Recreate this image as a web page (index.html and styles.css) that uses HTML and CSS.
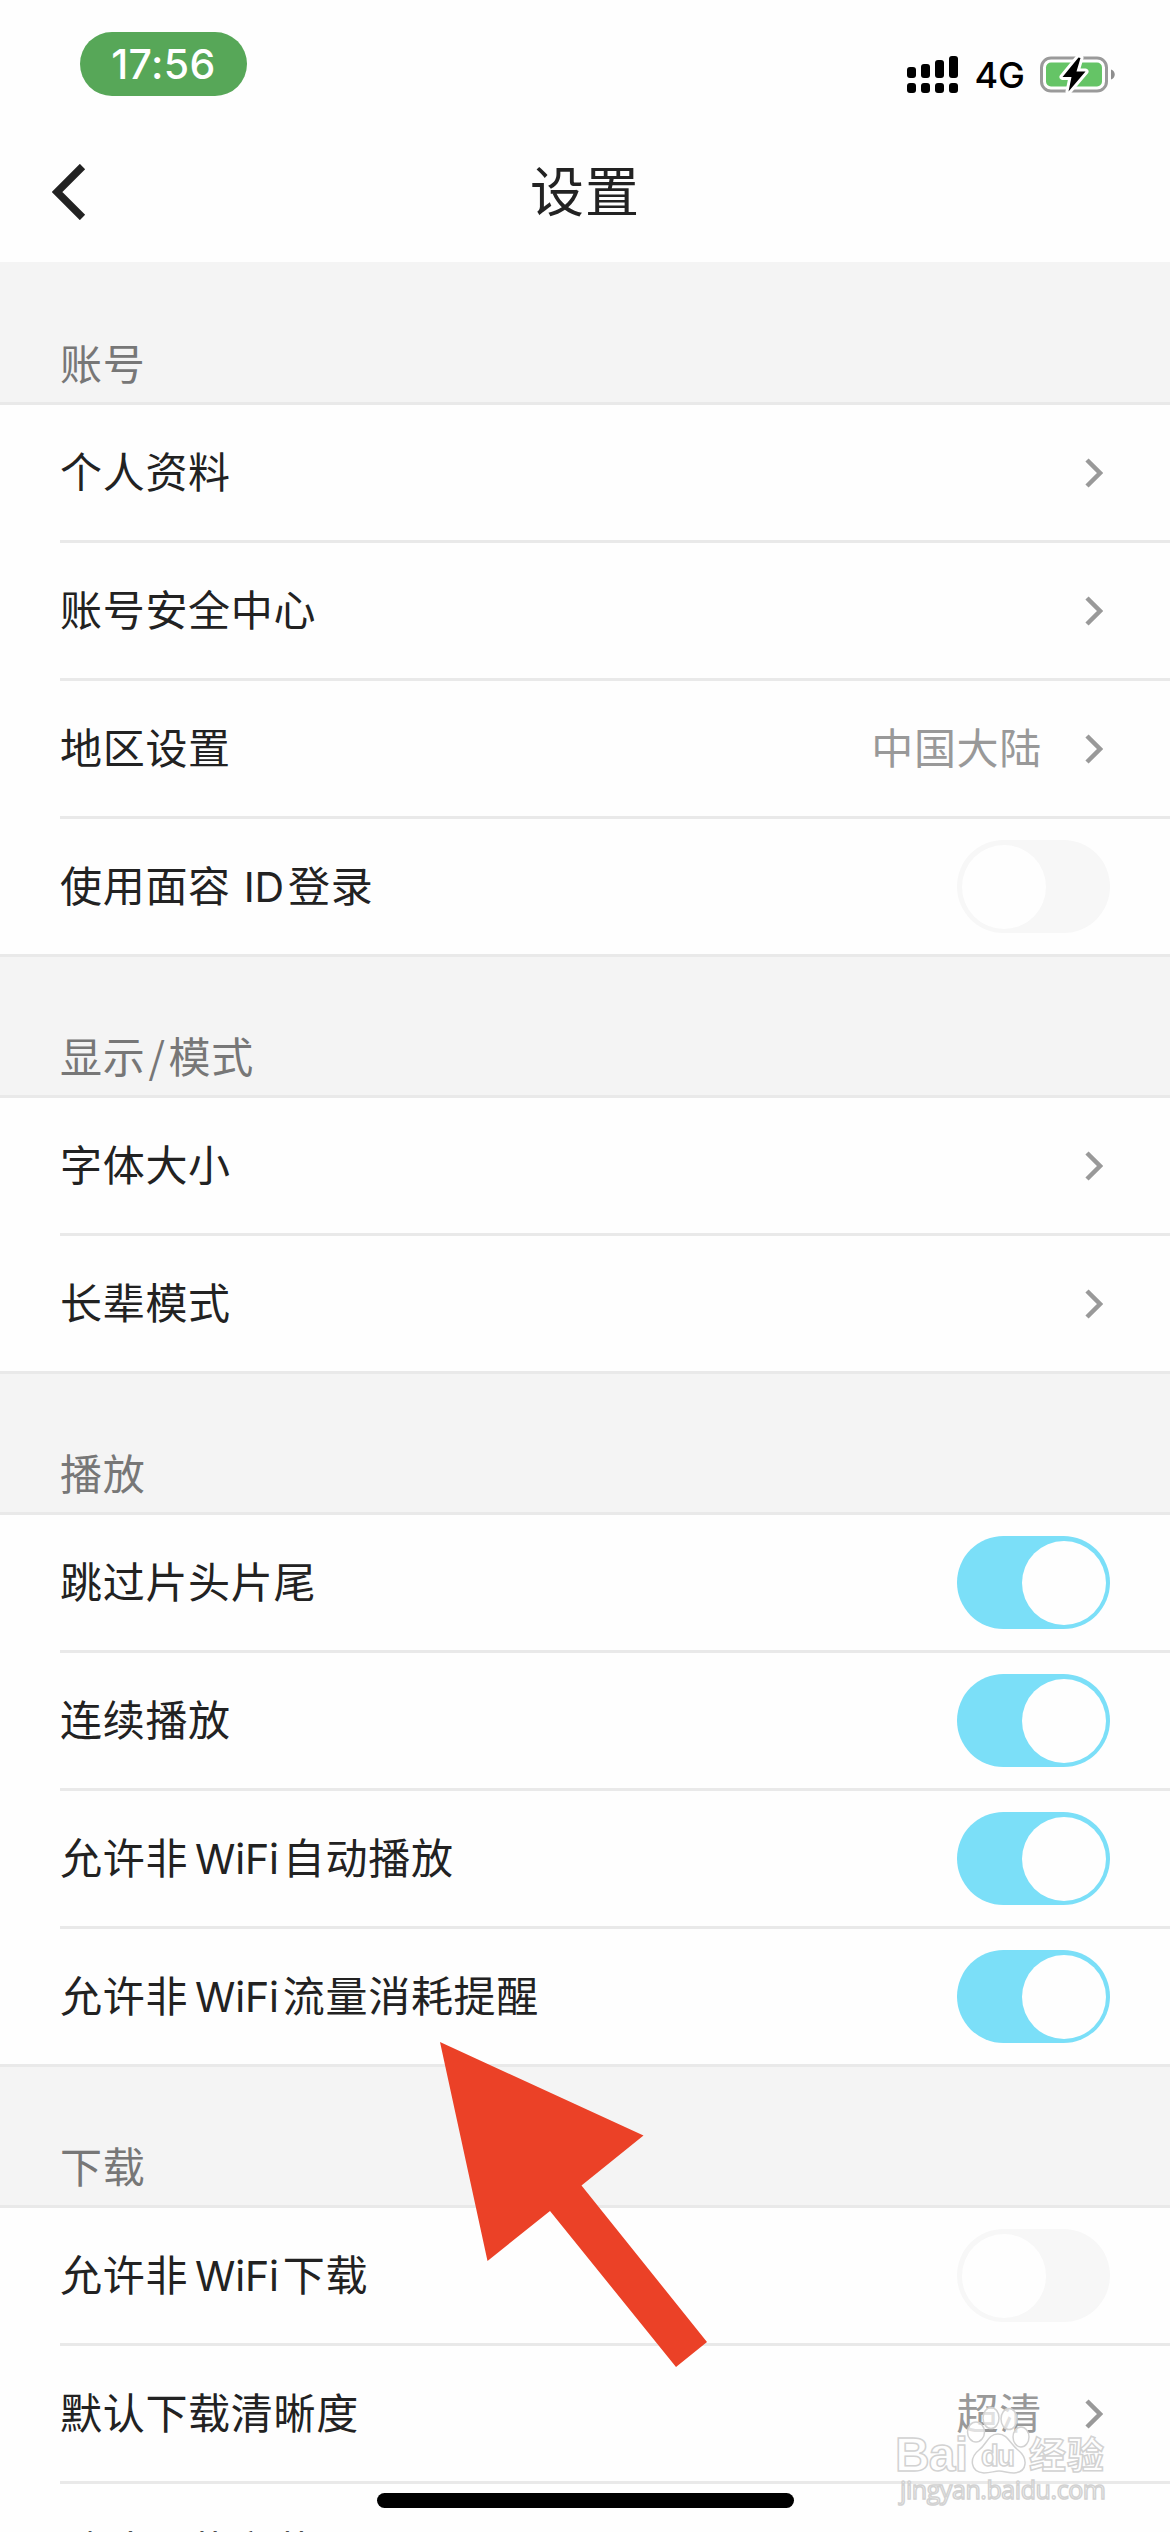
FILE: index.html
```
<!DOCTYPE html>
<html lang="zh-CN">
<head>
    <meta charset="UTF-8">
    <meta name="viewport" content="width=device-width, initial-scale=1.0">
    <link rel="stylesheet" href="styles.css">
    <title>设置</title>
</head>
<body>
  <div id="status-bar">
    <div id="clock">17:56</div>
    <div id="status-icons">
      <svg id="signal" viewBox="0 0 51 37" width="51" height="37">
        <rect x="0" y="11" width="9" height="11" rx="3"/>
        <rect x="14" y="8" width="9" height="14" rx="3"/>
        <rect x="28" y="4" width="9" height="18" rx="3"/>
        <rect x="42" y="0" width="9" height="22" rx="3"/>
        <rect x="0" y="27" width="9" height="10" rx="3"/>
        <rect x="14" y="27" width="9" height="10" rx="3"/>
        <rect x="28" y="27" width="9" height="10" rx="3"/>
        <rect x="42" y="27" width="9" height="10" rx="3"/>
      </svg>
      <span id="network">4G</span>
      <svg id="battery" viewBox="0 0 76 38" width="76" height="38">
        <rect x="1.5" y="2" width="65" height="33" rx="9.5" fill="none" stroke="#9a9a9a" stroke-width="3"/>
        <rect x="6" y="6.5" width="56" height="24" rx="5" fill="#65c466"/>
        <path d="M71 13.500c5 1.500 5 8.500 0 10z" fill="#8e8e8e"/>
        <path d="M38.500 1.500L22.500 21H31.500L28.500 35.500L45.500 15.500H36.500L40.500 2Z" fill="#000" stroke="#fff" stroke-width="6" stroke-linejoin="round" paint-order="stroke"/>
      </svg>
    </div>
  </div>

  <div id="navbar">
    <svg id="back" viewBox="0 0 34 56" width="34" height="56">
      <path d="M30.500 2.500L5 28L30.500 53.500" fill="none" stroke="#222" stroke-width="7.500"/>
    </svg>
    <h1>设置</h1>
  </div>

  <h2 class="first">账号</h2>
  <ul>
    <li><span class="label">个人资料</span><svg class="chevron" viewBox="0 0 18 30"><path d="M2 2L15 15L2 28"/></svg></li>
    <li><span class="label">账号安全中心</span><svg class="chevron" viewBox="0 0 18 30"><path d="M2 2L15 15L2 28"/></svg></li>
    <li><span class="label">地区设置</span><span class="value">中国大陆</span><svg class="chevron" viewBox="0 0 18 30"><path d="M2 2L15 15L2 28"/></svg></li>
    <li><span class="label">使用面容<span class="latin face-id">ID</span>登录</span><span class="switch"></span></li>
  </ul>

  <h2>显示<span class="slash">/</span>模式</h2>
  <ul>
    <li><span class="label">字体大小</span><svg class="chevron" viewBox="0 0 18 30"><path d="M2 2L15 15L2 28"/></svg></li>
    <li><span class="label">长辈模式</span><svg class="chevron" viewBox="0 0 18 30"><path d="M2 2L15 15L2 28"/></svg></li>
  </ul>

  <h2>播放</h2>
  <ul>
    <li><span class="label">跳过片头片尾</span><span class="switch on"></span></li>
    <li><span class="label">连续播放</span><span class="switch on"></span></li>
    <li><span class="label">允许非<span class="latin">WiFi</span>自动播放</span><span class="switch on"></span></li>
    <li><span class="label">允许非<span class="latin">WiFi</span>流量消耗提醒</span><span class="switch on"></span></li>
  </ul>

  <h2>下载</h2>
  <ul>
    <li><span class="label">允许非<span class="latin">WiFi</span>下载</span><span class="switch"></span></li>
    <li><span class="label">默认下载清晰度</span><span class="value">超清</span><svg class="chevron" viewBox="0 0 18 30"><path d="M2 2L15 15L2 28"/></svg></li>
    <li><span class="label">默认下载字幕</span></li>
  </ul>

  <svg id="arrow" viewBox="0 0 268 327" width="268" height="327">
    <path d="M0 0L203.500 93.500L141.500 143.500L267 300L236 325L110 169L47.500 219Z" fill="#eb4127"/>
  </svg>

  <svg id="watermark" viewBox="0 0 220 110" width="220" height="110">
    <g class="paw">
      <ellipse cx="72" cy="42" rx="8.500" ry="10"/>
      <ellipse cx="87" cy="28" rx="8" ry="10.500"/>
      <ellipse cx="105" cy="29" rx="8" ry="10.500"/>
      <ellipse cx="117" cy="47" rx="8" ry="10"/>
      <path d="M94 44C84 44 83 54 75 60C65 68 66 82 80 83C87 83 90 81 95 81C100 81 104 83 110 83C124 82 124 68 114 60C106 54 104 44 94 44Z"/>
    </g>
    <text class="brand" x="-9" y="81" textLength="73">Bai</text>
    <text class="du" x="77" y="76" textLength="34">du</text>
    <text class="brand-cn" x="125" y="79" textLength="75">经验</text>
    <text class="url" x="-4" y="109" textLength="206">jingyan.baidu.com</text>
  </svg>
  <div id="home-indicator"></div>
</body>
</html>
```

FILE: styles.css
```
* {
    box-sizing: border-box;
}

body {
    position: relative;
    width: 1170px;
    height: 2532px;
    margin: 0;
    overflow: hidden;
    background-color: #fefefe;
    color: #222;
    font-family: 'Noto Sans CJK SC', sans-serif;
    font-size: 42px;
    letter-spacing: 0.7px;
}

#status-bar {
    display: flex;
    justify-content: space-between;
    height: 120px;
    padding: 32px 54px 0 80px;
}

#clock {
    width: 167px;
    height: 64px;
    border-radius: 32px;
    background-color: #57a758;
    color: white;
    font: 500 41px/64px 'Inter', sans-serif;
    letter-spacing: 0.4px;
    text-align: center;
}

#status-icons {
    display: flex;
    align-items: center;
    height: 37px;
    margin-top: 24px;
}

#network {
    margin: 1px 15px 0 16px;
    color: black;
    font: 500 36px/37px 'Inter', sans-serif;
    letter-spacing: 0;
}

#navbar {
    display: flex;
    align-items: center;
    justify-content: center;
    position: relative;
    height: 142px;
}

#back {
    position: absolute;
    left: 52px;
    top: 44px;
}

h1 {
    margin: 0;
    padding-bottom: 5px;
    font-size: 54px;
    font-weight: 400;
    letter-spacing: 1px;
}

h2 {
    height: 138px;
    margin: 0;
    padding: 66px 60px 0;
    background-color: #f4f4f4;
    color: #777;
    font-size: 42px;
    font-weight: 400;
    line-height: 64px;
}

h2.first {
    height: 140px;
    padding-top: 68px;
}

ul {
    margin: 0;
    padding: 0;
    border-top: 3px solid #e9e9e9;
    border-bottom: 3px solid #e9e9e9;
    list-style: none;
}

li {
    display: flex;
    align-items: center;
    height: 138px;
    margin-left: 60px;
    padding-right: 60px;
    border-bottom: 3px solid #e9e9e9;
}

li:last-child {
    height: 135px;
    border-bottom: none;
}

.label,
.value {
    padding-bottom: 7px;
}

.latin {
    margin: 0 4px 0 7px;
    font-family: 'Inter', sans-serif;
    font-size: 41px;
    letter-spacing: -0.2px;
}

.face-id {
    margin-left: 13px;
}

.slash {
    margin: 0 3px;
}

.value {
    margin-left: auto;
    color: #999;
}

.chevron {
    width: 18px;
    height: 30px;
    margin-left: auto;
    margin-right: 7px;
    fill: none;
    stroke: #999;
    stroke-width: 4.500;
}

.value + .chevron {
    margin-left: 43px;
}

.switch {
    display: flex;
    width: 153px;
    height: 93px;
    margin-left: auto;
    padding: 4.500px;
    border-radius: 47px;
    background-color: #f7f7f7;
}

.switch::before {
    content: '';
    width: 84px;
    height: 84px;
    border-radius: 50%;
    background-color: #fefefe;
}

.switch.on {
    justify-content: flex-end;
    background-color: #7bdff8;
}

/* lies over the list */
#arrow {
    position: absolute;
    left: 440px;
    top: 2042px;
}

#home-indicator {
    position: absolute;
    left: 377px;
    top: 2493px;
    width: 417px;
    height: 15px;
    border-radius: 8px;
    background-color: black;
}

#watermark {
    position: absolute;
    left: 904px;
    top: 2390px;
    overflow: visible;
    fill: white;
    fill-opacity: 0.7;
    stroke: #d2d2d2;
    stroke-width: 1.5;
    letter-spacing: 0;
}

.brand {
    font: bold 48px 'Liberation Sans', sans-serif;
}

.du {
    font: bold 29px 'Liberation Sans', sans-serif;
}

.brand-cn {
    font: bold 37px 'Noto Sans CJK SC', sans-serif;
}

.url {
    font: 25px 'Open Sans', sans-serif;
}
```
